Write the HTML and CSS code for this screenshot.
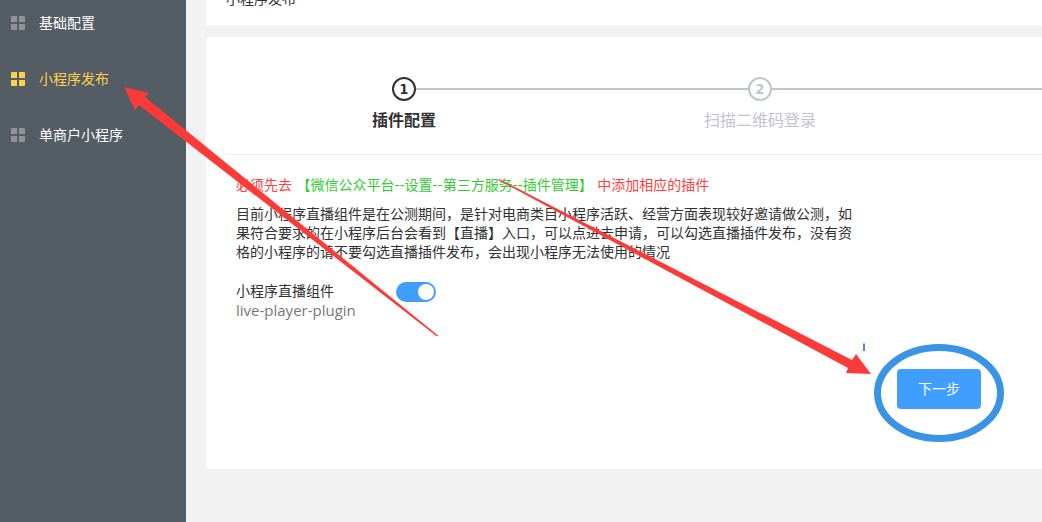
FILE: index.html
```html
<!DOCTYPE html>
<html lang="zh-CN">
<head>
  <meta charset="UTF-8">
  <meta name="viewport" content="width=device-width, initial-scale=1.0">
  <title>小程序发布</title>
  <link rel="stylesheet" href="styles.css">
</head>
<body>
  <div class="layout">
    <nav class="sidebar">
      <a class="menu-item" href="#">
        <svg class="menu-icon" viewBox="0 0 14 14"><path d="M0 1q0-1 1-1h5v6H0zM8 0h5q1 0 1 1v5H8zM0 8h6v6H1q-1 0-1-1zM8 8h6v5q0 1-1 1H8z"/></svg>
        <span>基础配置</span>
      </a>
      <a class="menu-item active" href="#">
        <svg class="menu-icon" viewBox="0 0 14 14"><path d="M0 1q0-1 1-1h5v6H0zM8 0h5q1 0 1 1v5H8zM0 8h6v6H1q-1 0-1-1zM8 8h6v5q0 1-1 1H8z"/></svg>
        <span>小程序发布</span>
      </a>
      <a class="menu-item" href="#">
        <svg class="menu-icon" viewBox="0 0 14 14"><path d="M0 1q0-1 1-1h5v6H0zM8 0h5q1 0 1 1v5H8zM0 8h6v6H1q-1 0-1-1zM8 8h6v5q0 1-1 1H8z"/></svg>
        <span>单商户小程序</span>
      </a>
    </nav>

    <main class="main">
      <header class="page-title">小程序发布</header>

      <section class="card">
        <ol class="steps">
          <li class="step current">
            <span class="step-num">1</span>
            <span class="step-title">插件配置</span>
          </li>
          <li class="step">
            <span class="step-num">2</span>
            <span class="step-title">扫描二维码登录</span>
          </li>
        </ol>

        <form class="plugin-form">
          <p class="notice">必须先去 <a href="#">【微信公众平台--设置--第三方服务--插件管理】</a> 中添加相应的插件</p>
          <p class="desc">目前小程序直播组件是在公测期间，是针对电商类目小程序活跃、经营方面表现较好邀请做公测，如果符合要求的在小程序后台会看到【直播】入口，可以点进去申请，可以勾选直播插件发布，没有资格的小程序的请不要勾选直播插件发布，会出现小程序无法使用的情况</p>
          <div class="plugin">
            <label class="plugin-label" for="livePlugin">
              小程序直播组件
              <span class="plugin-name">live-player-plugin</span>
            </label>
            <input class="switch" type="checkbox" id="livePlugin" checked>
          </div>
          <div class="actions">
            <button type="button" class="btn-next">下一步</button>
          </div>
        </form>
      </section>
    </main>

    <!-- guide arrows -->
    <svg class="guide" width="1042" height="522" viewBox="0 0 1042 522">
      <path class="arrow" d="M124 87L149 93L145 97L438 335.500L437 336.500L139 105L135 110Z"/>
      <path class="arrow" d="M871 374L856 354L852 360L499 179L498 180L848 368L846 373Z"/>
      <ellipse class="ring" cx="939" cy="393" rx="61.5" ry="45.5"/>
      <path class="tick" d="M864 343.500V351"/>
    </svg>
  </div>
</body>
</html>
```

FILE: styles.css
```css
* {
  box-sizing: border-box;
}
body {
  margin: 0;
  font-family: "Liberation Sans", "Noto Sans CJK SC", sans-serif;
  font-size: 14px;
  line-height: 19px;
  color: #303133;
  background: #f2f2f2;
}
.layout {
  position: relative;
  display: flex;
  min-height: 100vh;
  overflow: hidden;
}
.sidebar {
  flex: 0 0 186px;
  background: #545c64;
}
.menu-item {
  display: flex;
  align-items: center;
  gap: 14px;
  height: 56px;
  padding-left: 11px;
  color: #fff;
  text-decoration: none;
}
.menu-item:first-child {
  height: 51px;
  padding-bottom: 5px;
}
.menu-icon {
  width: 14px;
  height: 14px;
  fill: #909399;
}
.menu-item.active {
  color: #ffd04b;
}
.menu-item.active .menu-icon {
  fill: #ffd04b;
}
.main {
  flex: 1;
  min-width: 0;
  padding-left: 20px;
}
.page-title {
  display: flex;
  align-items: flex-end;
  height: 27px;
  padding: 0 20px 17px;
  background: #fff;
  border-bottom: 1px solid #ebeef5;
}
.card {
  margin-top: 10px;
  padding: 40px 0 60px 20px;
  background: #fff;
  border-radius: 4px 0 0 4px;
}
.steps {
  display: flex;
  height: 78px;
  margin: 0;
  padding: 0;
  list-style: none;
  border-bottom: 1px solid #ebeef5;
}
.step {
  position: relative;
  display: flex;
  flex: 0 0 356px;
  flex-direction: column;
  align-items: center;
  gap: 8px;
  color: #c0c4cc;
  font-size: 16px;
}
.step::before {
  content: "";
  position: absolute;
  top: 11px;
  left: 50%;
  width: 100%;
  height: 2px;
  background: #c0c4cc;
}
.step-num {
  z-index: 1;
  width: 24px;
  height: 24px;
  border: 2px solid #c0c4cc;
  border-radius: 50%;
  background: #fff;
  font-family: "DejaVu Sans Condensed", "DejaVu Sans", sans-serif;
  font-size: 14px;
  font-weight: 700;
  line-height: 20px;
  text-align: center;
}
.step-title {
  line-height: 24px;
}
.step.current {
  color: #303133;
}
.step.current .step-num {
  border-color: #303133;
}
.step.current .step-title {
  font-weight: 700;
}
.plugin-form {
  max-width: 755px;
  padding: 21px 0 0 10px;
}
.notice {
  margin: 0 0 10px;
  color: #ff4040;
  font-family: "DejaVu Sans", "Noto Sans CJK SC", sans-serif;
}
.notice a {
  color: #32cd32;
  text-decoration: none;
}
.desc {
  max-width: 620px;
  margin: 0 0 20px;
}
.plugin {
  display: flex;
  align-items: flex-start;
}
.plugin-label {
  width: 160px;
}
.plugin-name {
  display: block;
  color: #777;
  font-family: "Open Sans", sans-serif;
  font-size: 15px;
}
.switch {
  appearance: none;
  display: flex;
  justify-content: flex-start;
  width: 40px;
  height: 20px;
  margin: 0;
  padding: 2px;
  border-radius: 10px;
  background: #dcdfe6;
  cursor: pointer;
}
.switch::before {
  content: "";
  width: 16px;
  height: 16px;
  border-radius: 50%;
  background: #fff;
}
.switch:checked {
  justify-content: flex-end;
  background: #409eff;
}
.actions {
  margin-top: 49px;
  text-align: right;
}
.btn-next {
  width: 84px;
  height: 40px;
  padding: 0;
  border: none;
  border-radius: 4px;
  background: #409eff;
  color: #fff;
  font-family: inherit;
  font-size: 14px;
  line-height: 19px;
  cursor: pointer;
}
.guide {
  position: absolute;
  top: 0;
  left: 0;
  pointer-events: none;
}
.arrow {
  fill: #fc3a38;
}
.ring {
  fill: none;
  stroke: #3a93e5;
  stroke-width: 7px;
}
.tick {
  stroke: #3a93e5;
  stroke-width: 2px;
}
```
